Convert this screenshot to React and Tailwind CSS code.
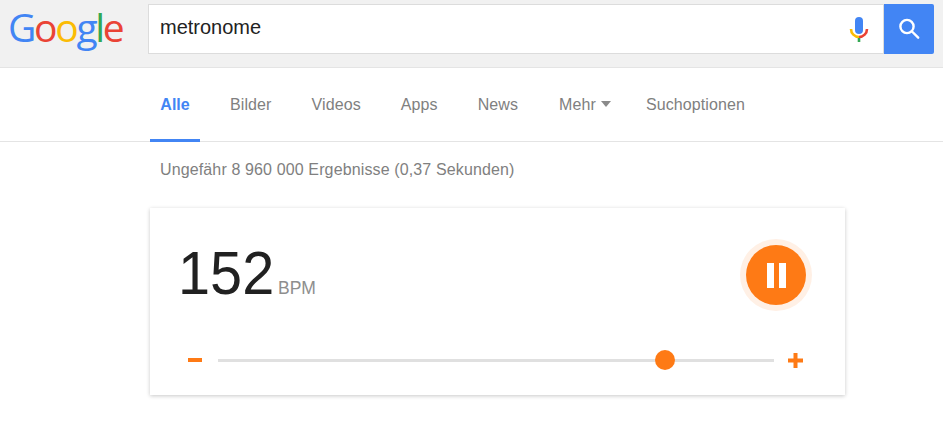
export default function App() {
  return (
    <div className="w-[943px] h-[421px] overflow-hidden bg-white font-['Liberation_Sans',Arial,sans-serif]">
      <header className="h-[68px] bg-[#f1f1f1] border-b border-[#e4e4e4] flex items-start">
        <div className="w-[148px] h-[53px] pl-[8px] flex items-center font-['Open_Sans',sans-serif] text-[39px] leading-none tracking-[-2.3px] font-medium">
          <span className="text-[#4285f4]">G</span>
          <span className="text-[#ea4335]">o</span>
          <span className="text-[#fbbc05]">o</span>
          <span className="text-[#4285f4]">g</span>
          <span className="text-[#34a853]">l</span>
          <span className="text-[#ea4335]">e</span>
        </div>
        <div className="mt-[4px] w-[736px] h-[50px] bg-white border border-[#dcdcdc] flex items-center justify-between pl-[11px] pr-[14px]">
          <span className="text-[20px] text-[#222] relative top-[-2px]">metronome</span>
          <svg width="20" height="26" viewBox="0 0 20 26" className="relative top-[1px]">
            <rect x="6" y="0" width="8" height="17" rx="4" fill="#4285f4" />
            <path d="M2 12a8 8 0 0 0 8 8" fill="none" stroke="#fbbc05" strokeWidth="2.6" />
            <path d="M18 12a8 8 0 0 1-8 8" fill="none" stroke="#ea4335" strokeWidth="2.6" />
            <rect x="8.7" y="21" width="2.6" height="4" fill="#34a853" />
          </svg>
        </div>
        <button className="mt-[4px] w-[50px] h-[50px] bg-[#4285f4] rounded-r-[2px] flex items-center justify-center">
          <svg width="24" height="24" viewBox="0 0 24 24" fill="none" stroke="#fff" strokeWidth="2.4" strokeLinecap="round">
            <circle cx="10" cy="9.5" r="6.6" />
            <path d="M15 14.5l6.2 6.2" />
          </svg>
        </button>
      </header>

      <nav className="h-[74px] border-b border-[#e4e4e4] pl-[150px] flex items-stretch text-[16px] text-[#808080] tracking-[0.1px]">
        <div className="w-[50px] border-b-[3px] border-[#4285f4] mb-[-1px] flex justify-center pt-[25px] font-bold text-[#4285f4] tracking-normal">Alle</div>
        <div className="pl-[30px] pt-[25px]">Bilder</div>
        <div className="pl-[40px] pt-[25px]">Videos</div>
        <div className="pl-[40px] pt-[25px]">Apps</div>
        <div className="pl-[40px] pt-[25px]">News</div>
        <div className="pl-[41px] pt-[25px] flex items-start">
          Mehr
          <svg width="10" height="6" viewBox="0 0 10 6" className="ml-[5px] mt-[8px]"><path d="M0 0h10L5 6z" fill="#8a8a8a" /></svg>
        </div>
        <div className="pl-[35px] pt-[25px]">Suchoptionen</div>
      </nav>

      <div className="pl-[160px] pt-[19px] text-[16px] leading-[18px] text-[#808080] tracking-[0.13px]">Ungefähr 8 960 000 Ergebnisse (0,37 Sekunden)</div>

      <section className="ml-[150px] mt-[29px] w-[695px] h-[187px] bg-white shadow-[0_1px_4px_rgba(0,0,0,0.22)] pl-[28px] pr-[34px] flex flex-col">
        <div className="flex items-center justify-between h-[132px]">
          <div className="flex items-baseline relative top-[-1px]">
            <span className="inline-block origin-left scale-x-[0.93] text-[62px] leading-none text-[#212121]">152</span>
            <span className="ml-[-3.5px] text-[17.5px] text-[#8e8e8e]">BPM</span>
          </div>
          <button className="size-[60px] rounded-full bg-[#fe7a15] ring-[6px] ring-[#fff0e5] flex items-center justify-center gap-[5px] relative top-[1px] mr-[5px]">
            <span className="w-[7px] h-[25px] bg-white" />
            <span className="w-[7px] h-[25px] bg-white" />
          </button>
        </div>
        <div className="flex items-center h-[40px] pl-[10px]">
          <span className="w-[14px] h-[4px] bg-[#fe7a15]" />
          <div className="ml-[16px] w-[556px] h-[3px] bg-[#e0e0e0] relative">
            <span className="absolute left-[437px] top-[-9px] size-[20px] rounded-full bg-[#fe7a15]" />
          </div>
          <svg width="15" height="15" viewBox="0 0 15 15" className="ml-[14px]">
            <path d="M5.5 0h4v5.5H15v4H9.5V15h-4V9.5H0v-4h5.5z" fill="#fe7a15" />
          </svg>
        </div>
      </section>
    </div>
  );
}
